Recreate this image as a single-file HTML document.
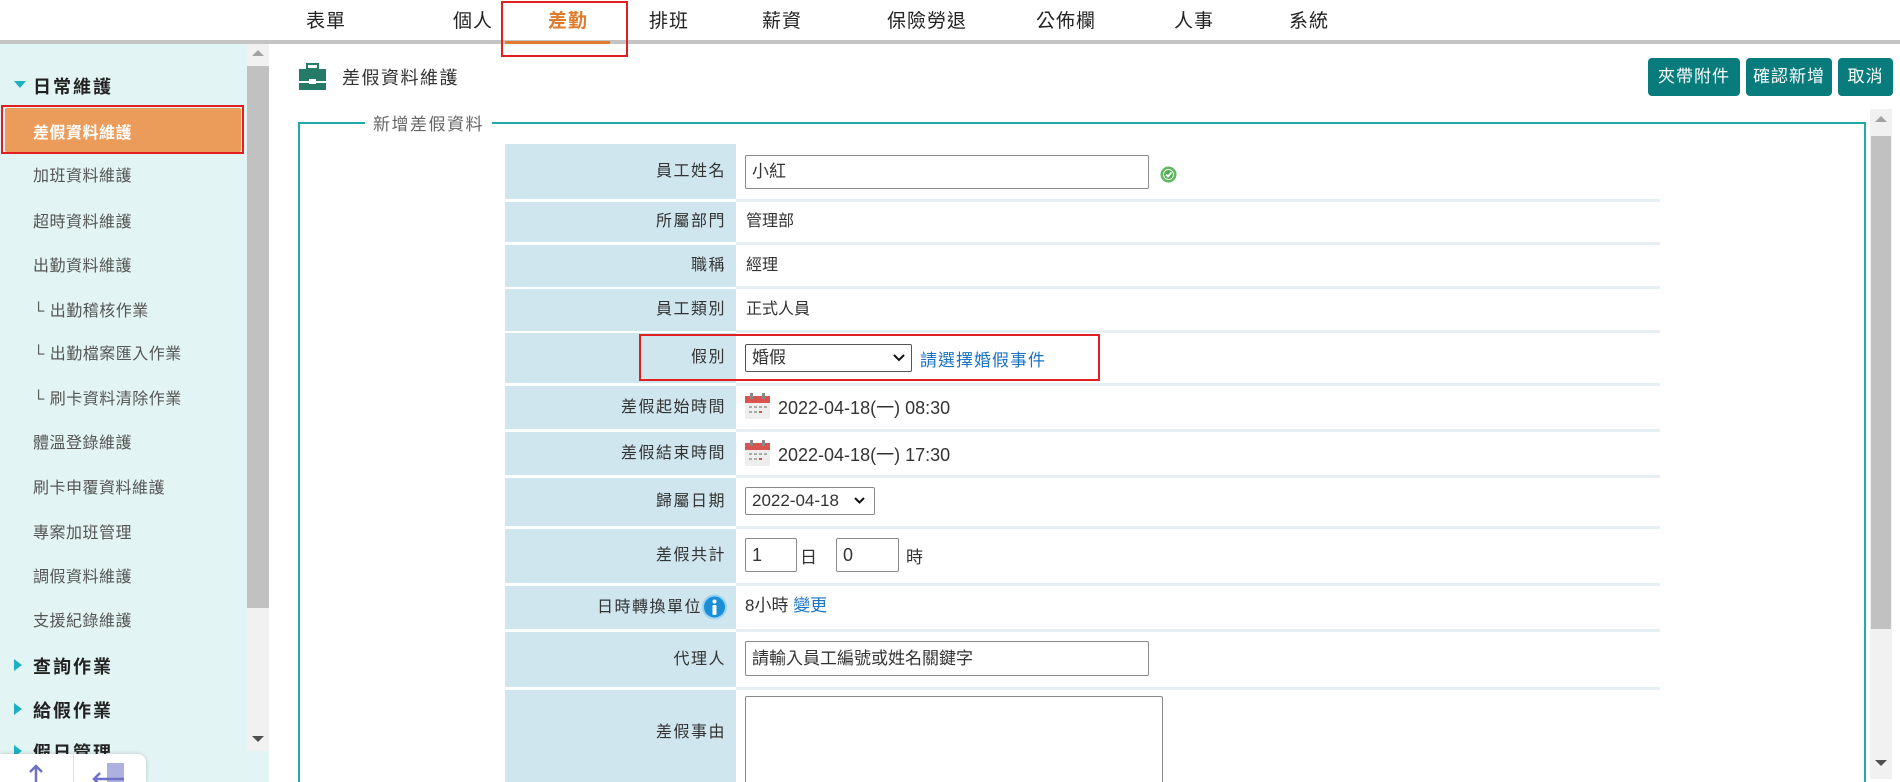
<!DOCTYPE html>
<html><head><meta charset="utf-8">
<style>
*{margin:0;padding:0;box-sizing:border-box}
html,body{width:1900px;height:782px;overflow:hidden}
body{background:#fff;font-family:"Liberation Sans","Noto Sans CJK TC",sans-serif;color:#333;position:relative}
.a{position:absolute;white-space:nowrap}
.tab{position:absolute;top:6px;font-size:19px;color:#222;transform:translateX(-50%);letter-spacing:1px}
.side{position:absolute;left:0;top:44px;width:269px;height:738px;background:#e3f4f4}
.it{position:absolute;left:33px;font-size:16px;color:#555;letter-spacing:0.5px}
.hd{position:absolute;left:33px;font-size:18px;color:#222;font-weight:bold;letter-spacing:2px}
.tri{position:absolute;left:14px;width:0;height:0;border-top:6px solid transparent;border-bottom:6px solid transparent;border-left:8px solid #1eb0c0}
.btn{position:absolute;top:58px;height:38px;background:#087b7d;color:#fff;font-size:17px;border-radius:4px;text-align:center;line-height:38px;letter-spacing:1px}
.lab{position:absolute;left:505px;width:231px;background:#cfe6ef;text-align:right;padding-right:10px;font-size:16px;color:#333;letter-spacing:1.5px}
.val{position:absolute;left:736px;width:924px;border-bottom:3px solid #e6f0f4;font-size:16px}
.inp{position:absolute;border:1px solid #8a8a8a;border-radius:2px;background:#fff;font-size:17px;padding-left:6px}
.cal{position:absolute;width:25px;height:26px}
</style></head><body>
<div class="tab" style="left:326px">表單</div>
<div class="tab" style="left:473px">個人</div>
<div class="tab" style="left:568px;color:#e07a2c;font-weight:bold">差勤</div>
<div class="tab" style="left:669px">排班</div>
<div class="tab" style="left:782px">薪資</div>
<div class="tab" style="left:927px">保險勞退</div>
<div class="tab" style="left:1066px">公佈欄</div>
<div class="tab" style="left:1194px">人事</div>
<div class="tab" style="left:1309px">系統</div>
<div class="a" style="left:0;top:40px;width:1900px;height:4px;background:#c4c4c4"></div>
<div class="a" style="left:505px;top:41px;width:105px;height:3px;background:#e07a2c"></div>
<div class="a" style="left:501px;top:1px;width:127px;height:56px;border:2px solid #e02020"></div>

<div class="side"></div>
<div class="a" style="left:247px;top:44px;width:22px;height:707px;background:#f1f1f1"></div>
<div class="a" style="left:247px;top:66px;width:22px;height:542px;background:#c1c1c1"></div>
<div class="a" style="left:252px;top:50px;width:0;height:0;border-left:6px solid transparent;border-right:6px solid transparent;border-bottom:6px solid #a3a3a3"></div>
<div class="a" style="left:252px;top:736px;width:0;height:0;border-left:6px solid transparent;border-right:6px solid transparent;border-top:6px solid #505050"></div>
<div class="a" style="left:14px;top:81px;width:0;height:0;border-left:6px solid transparent;border-right:6px solid transparent;border-top:7px solid #1eb0c0"></div>
<div class="hd" style="top:73px">日常維護</div>
<div class="a" style="left:1px;top:105px;width:243px;height:49px;border:2px solid #e02020"></div>
<div class="a" style="left:5px;top:108px;width:236px;height:44px;background:#ec9c5a;border-radius:2px"></div>
<div class="it" style="top:119px;color:#fff;font-weight:bold">差假資料維護</div>
<div class="it" style="top:162px">加班資料維護</div>
<div class="it" style="top:208px">超時資料維護</div>
<div class="it" style="top:252px">出勤資料維護</div>
<div class="it" style="top:297px">└ 出勤稽核作業</div>
<div class="it" style="top:340px">└ 出勤檔案匯入作業</div>
<div class="it" style="top:385px">└ 刷卡資料清除作業</div>
<div class="it" style="top:429px">體溫登錄維護</div>
<div class="it" style="top:474px">刷卡申覆資料維護</div>
<div class="it" style="top:519px">專案加班管理</div>
<div class="it" style="top:563px">調假資料維護</div>
<div class="it" style="top:607px">支援紀錄維護</div>
<div class="tri" style="top:659px"></div><div class="hd" style="top:653px">查詢作業</div>
<div class="tri" style="top:703px"></div><div class="hd" style="top:697px">給假作業</div>
<div class="tri" style="top:745px"></div><div class="hd" style="top:739px;height:15px;overflow:hidden">假日管理</div>
<div class="a" style="left:0;top:754px;width:146px;height:28px;background:#fff;border-radius:0 8px 0 0;box-shadow:0 0 4px rgba(0,0,0,.2)"></div>
<div class="a" style="left:73px;top:754px;width:1px;height:28px;background:#ddd"></div>
<svg class="a" style="left:28px;top:764px" width="16" height="18"><path d="M8 2v16M2 8l6-6 6 6" stroke="#6d72c8" stroke-width="2.5" fill="none"/></svg>
<div class="a" style="left:107px;top:763px;width:17px;height:19px;background:#aeb0e0"></div>
<svg class="a" style="left:92px;top:770px" width="34" height="12"><path d="M2 9h30M8 3l-6 6 6 6" stroke="#6d72c8" stroke-width="2.5" fill="none"/></svg>

<svg class="a" style="left:299px;top:63px" width="27" height="27" viewBox="0 0 27 27"><rect x="8" y="1" width="11" height="5" fill="none" stroke="#257a68" stroke-width="2"/><rect x="0" y="6" width="27" height="12" fill="#257a68"/><rect x="0" y="20" width="27" height="7" fill="#257a68"/><rect x="10" y="16" width="7" height="5" fill="#fff"/></svg>
<div class="a" style="left:342px;top:64px;font-size:18px;color:#333;letter-spacing:1.5px">差假資料維護</div>
<div class="btn" style="left:1648px;width:92px">夾帶附件</div>
<div class="btn" style="left:1746px;width:86px">確認新增</div>
<div class="btn" style="left:1838px;width:55px">取消</div>

<div class="a" style="left:298px;top:122px;width:1568px;height:660px;border:2px solid #22aaaa;border-bottom:none"></div>
<div class="a" style="left:365px;top:110px;padding:0 8px;background:#fff;font-size:17px;color:#666;letter-spacing:1.5px">新增差假資料</div>
<div class="a" style="left:1870px;top:109px;width:22px;height:670px;background:#f1f1f1"></div>
<div class="a" style="left:1871px;top:136px;width:20px;height:493px;background:#c1c1c1"></div>
<div class="a" style="left:1875px;top:116px;width:0;height:0;border-left:6px solid transparent;border-right:6px solid transparent;border-bottom:6px solid #a3a3a3"></div>
<div class="a" style="left:1875px;top:760px;width:0;height:0;border-left:6px solid transparent;border-right:6px solid transparent;border-top:6px solid #505050"></div>

<div class="lab" style="top:144px;height:55px;line-height:55px">員工姓名</div>
<div class="val" style="top:144px;height:58px"></div>
<div class="inp" style="left:745px;top:155px;width:404px;height:34px;line-height:32px">小紅</div>
<svg class="a" style="left:1160px;top:166px" width="17" height="17" viewBox="0 0 17 17"><circle cx="8.5" cy="8.5" r="8" fill="#5cb85c"/><circle cx="8.5" cy="8.5" r="5.5" fill="#fff"/><circle cx="8.5" cy="8.5" r="4.5" fill="#4cae4c"/><path d="M6 8.5l2 2 3.5-4" stroke="#fff" stroke-width="1.8" fill="none"/></svg>

<div class="lab" style="top:202px;height:40px;line-height:40px">所屬部門</div>
<div class="val" style="top:199px;height:46px;line-height:46px;padding-left:10px">管理部</div>
<div class="lab" style="top:245px;height:42px;line-height:42px">職稱</div>
<div class="val" style="top:242px;height:47px;line-height:47px;padding-left:10px">經理</div>
<div class="lab" style="top:289px;height:42px;line-height:42px">員工類別</div>
<div class="val" style="top:287px;height:46px;line-height:46px;padding-left:10px">正式人員</div>
<div class="lab" style="top:333px;height:50px;line-height:50px">假別</div>
<div class="val" style="top:331px;height:55px"></div>
<div class="inp" style="left:745px;top:344px;width:167px;height:28px;line-height:26px;border-color:#555">婚假</div>
<svg class="a" style="left:893px;top:353px" width="12" height="9"><path d="M1 2l5 5 5-5" stroke="#111" stroke-width="2" fill="none"/></svg>
<div class="a" style="left:920px;top:346px;font-size:17px;color:#1a73c8;letter-spacing:1px">請選擇婚假事件</div>
<div class="a" style="left:639px;top:334px;width:461px;height:47px;border:2px solid #e02020"></div>

<div class="lab" style="top:386px;height:43px;line-height:43px">差假起始時間</div>
<div class="val" style="top:384px;height:48px"></div>
<div class="lab" style="top:432px;height:43px;line-height:43px">差假結束時間</div>
<div class="val" style="top:429px;height:49px"></div>
<svg class="cal" style="left:745px;top:393px" viewBox="0 0 25 26"><rect x="0" y="3" width="25" height="23" rx="2" fill="#eee"/><rect x="0" y="3" width="25" height="7" fill="#d9534f"/><rect x="5" y="0" width="3" height="6" fill="#888"/><rect x="17" y="0" width="3" height="6" fill="#888"/><g fill="#aaa"><rect x="4" y="13" width="3" height="2"/><rect x="9" y="13" width="3" height="2"/><rect x="14" y="13" width="3" height="2"/><rect x="4" y="18" width="3" height="2"/><rect x="9" y="18" width="3" height="2"/><rect x="14" y="18" width="3" height="2" fill="#d9534f"/><rect x="19" y="13" width="3" height="2"/></g></svg>
<div class="a" style="left:778px;top:394px;font-size:18px">2022-04-18(一) 08:30</div>
<svg class="cal" style="left:745px;top:440px" viewBox="0 0 25 26"><rect x="0" y="3" width="25" height="23" rx="2" fill="#eee"/><rect x="0" y="3" width="25" height="7" fill="#d9534f"/><rect x="5" y="0" width="3" height="6" fill="#888"/><rect x="17" y="0" width="3" height="6" fill="#888"/><g fill="#aaa"><rect x="4" y="13" width="3" height="2"/><rect x="9" y="13" width="3" height="2"/><rect x="14" y="13" width="3" height="2"/><rect x="4" y="18" width="3" height="2"/><rect x="9" y="18" width="3" height="2"/><rect x="14" y="18" width="3" height="2" fill="#d9534f"/><rect x="19" y="13" width="3" height="2"/></g></svg>
<div class="a" style="left:778px;top:441px;font-size:18px">2022-04-18(一) 17:30</div>

<div class="lab" style="top:478px;height:48px;line-height:48px">歸屬日期</div>
<div class="val" style="top:475px;height:54px"></div>
<div class="inp" style="left:745px;top:487px;width:130px;height:28px;line-height:26px;font-size:17px">2022-04-18</div>
<svg class="a" style="left:854px;top:497px" width="11" height="8"><path d="M1 1l4.5 4.5 4.5-4.5" stroke="#111" stroke-width="2" fill="none"/></svg>

<div class="lab" style="top:529px;height:54px;line-height:54px">差假共計</div>
<div class="val" style="top:526px;height:60px"></div>
<div class="inp" style="left:745px;top:538px;width:52px;height:34px;line-height:32px;font-size:18px">1</div>
<div class="a" style="left:800px;top:543px;font-size:17px">日</div>
<div class="inp" style="left:836px;top:538px;width:63px;height:34px;line-height:32px;font-size:18px">0</div>
<div class="a" style="left:906px;top:543px;font-size:17px">時</div>

<div class="lab" style="top:586px;height:43px;line-height:43px;padding-right:34px">日時轉換單位</div>
<svg class="a" style="left:702px;top:594px" width="25" height="26" viewBox="0 0 25 26"><circle cx="12.5" cy="13" r="11.5" fill="#1a8fd8" stroke="#9ad4f4" stroke-width="2"/><circle cx="12.5" cy="7.5" r="2" fill="#fff"/><rect x="10.5" y="11" width="4" height="10" rx="1" fill="#fff"/></svg>
<div class="val" style="top:583px;height:49px;line-height:46px;padding-left:9px;font-size:17px">8小時 <span style="color:#1a73c8">變更</span></div>

<div class="lab" style="top:632px;height:55px;line-height:55px">代理人</div>
<div class="val" style="top:629px;height:61px"></div>
<div class="inp" style="left:745px;top:641px;width:404px;height:35px;line-height:33px;font-size:17px">請輸入員工編號或姓名關鍵字</div>

<div class="lab" style="top:690px;height:92px;line-height:86px">差假事由</div>
<div class="inp" style="left:745px;top:696px;width:418px;height:86px;border-bottom:none;border-radius:2px 2px 0 0"></div>
</body></html>
